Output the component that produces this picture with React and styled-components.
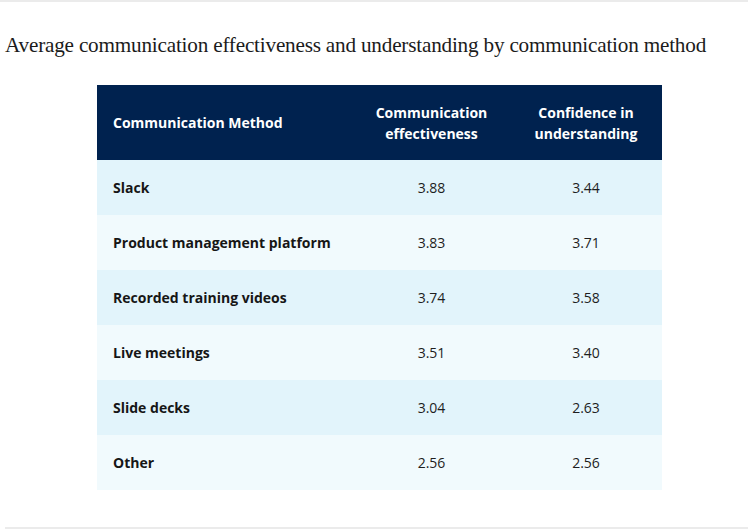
import React from 'react'
import styled, { createGlobalStyle } from 'styled-components'

const GlobalStyle = createGlobalStyle`
  body {
    margin: 0;
    background: #ffffff;
  }
`

const Page = styled.div`
  width: 748px;
  height: 531px;
  box-sizing: border-box;
  border-top: 2px solid #ebebeb;
  display: flex;
  flex-direction: column;
`

const Title = styled.h2`
  margin: 31px 0 0 5px;
  font-family: "Liberation Serif", serif;
  font-weight: 400;
  font-size: 21.2px;
  line-height: 24px;
  color: #1b1b1b;
  letter-spacing: -0.2px;
`

const Figure = styled.div`
  padding: 28px 0 0 97px;
  flex: 1;
`

const Table = styled.table`
  width: 565px;
  border-collapse: collapse;
  table-layout: fixed;
  font-family: "Open Sans", "Noto Sans", sans-serif;
`

const HeadCell = styled.th`
  background: #00224f;
  color: #ffffff;
  font-weight: 700;
  font-size: 14px;
  line-height: 21px;
  height: 75px;
  padding: 0 16px;
  box-sizing: border-box;
  text-align: ${p => (p.$left ? 'left' : 'center')};
  vertical-align: middle;
`

const Row = styled.tr`
  background: ${p => (p.$odd ? '#e2f4fb' : '#f1fafd')};
`

const Label = styled.td`
  height: 55px;
  padding: 0 16px;
  font-weight: 700;
  font-size: 14px;
  color: #161616;
`

const Value = styled.td`
  text-align: center;
  font-size: 14px;
  color: #1e1e1e;
`

const Footer = styled.div`
  margin: 0 0 2px 5px;
  border-bottom: 2px solid #ebebeb;
`

const rows = [
  ['Slack', '3.88', '3.44'],
  ['Product management platform', '3.83', '3.71'],
  ['Recorded training videos', '3.74', '3.58'],
  ['Live meetings', '3.51', '3.40'],
  ['Slide decks', '3.04', '2.63'],
  ['Other', '2.56', '2.56'],
]

const App = () => {
  return (
    <Page>
      <GlobalStyle />
      <Title>Average communication effectiveness and understanding by communication method</Title>
      <Figure>
        <Table>
          <colgroup>
            <col style={{ width: 256 }} />
            <col style={{ width: 157 }} />
            <col style={{ width: 152 }} />
          </colgroup>
          <thead>
            <tr>
              <HeadCell $left>Communication Method</HeadCell>
              <HeadCell>Communication effectiveness</HeadCell>
              <HeadCell>Confidence in understanding</HeadCell>
            </tr>
          </thead>
          <tbody>
            {rows.map((r, i) => (
              <Row key={r[0]} $odd={i % 2 === 0}>
                <Label>{r[0]}</Label>
                <Value>{r[1]}</Value>
                <Value>{r[2]}</Value>
              </Row>
            ))}
          </tbody>
        </Table>
      </Figure>
      <Footer />
    </Page>
  )
}

export default App
